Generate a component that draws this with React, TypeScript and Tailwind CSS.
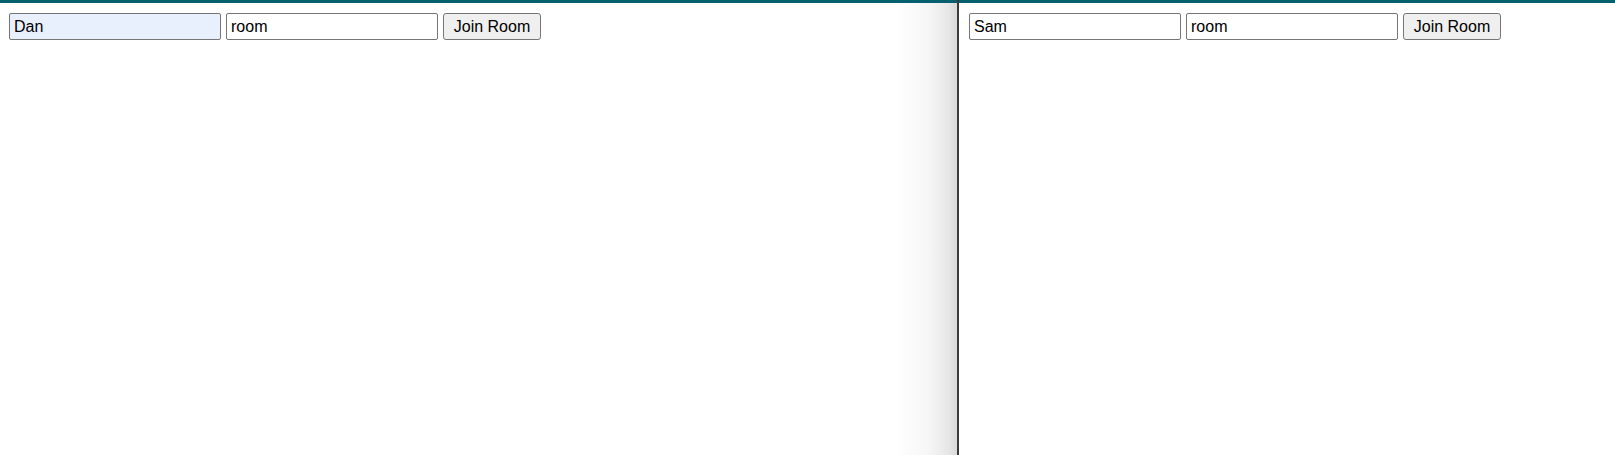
import React from "react";

type JoinFormProps = {
  name: string;
  room: string;
  autofilled?: boolean;
};

const JoinForm: React.FC<JoinFormProps> = ({ name, room, autofilled }) => {
  return (
    <div className="flex items-start gap-[5px]">
      <input
        defaultValue={name}
        className={
          "w-[212px] h-[27px] border border-[#767676] rounded-[2px] pl-[4px] text-[16px] text-black outline-none " +
          (autofilled ? "bg-[#e8f0fe]" : "bg-white")
        }
      />
      <input
        defaultValue={room}
        className="w-[212px] h-[27px] border border-[#767676] rounded-[2px] pl-[4px] text-[16px] text-black bg-white outline-none"
      />
      <button className="w-[98px] h-[27px] border border-[#767676] rounded-[3px] bg-[#efefef] text-[16px] text-black">
        Join Room
      </button>
    </div>
  );
};

export default function App() {
  return (
    <div className="flex w-[1615px] h-[455px] bg-white font-['Liberation_Sans',Arial,sans-serif] overflow-hidden">
      <div className="w-[957px] h-full border-t-[3px] border-[#075e6c] pt-[10px] pl-[9px] bg-[linear-gradient(to_right,#ffffff_calc(100%_-_60px),#f6f6f6_calc(100%_-_28px),#e6e6e6_calc(100%_-_8px),#d8d8d8)]">
        <JoinForm name="Dan" room="room" autofilled />
      </div>
      <div className="w-[2px] h-full bg-[#3a3a3a]" />
      <div className="flex-1 h-full border-t-[3px] border-[#075e6c] pt-[10px] pl-[10px]">
        <JoinForm name="Sam" room="room" />
      </div>
    </div>
  );
}
